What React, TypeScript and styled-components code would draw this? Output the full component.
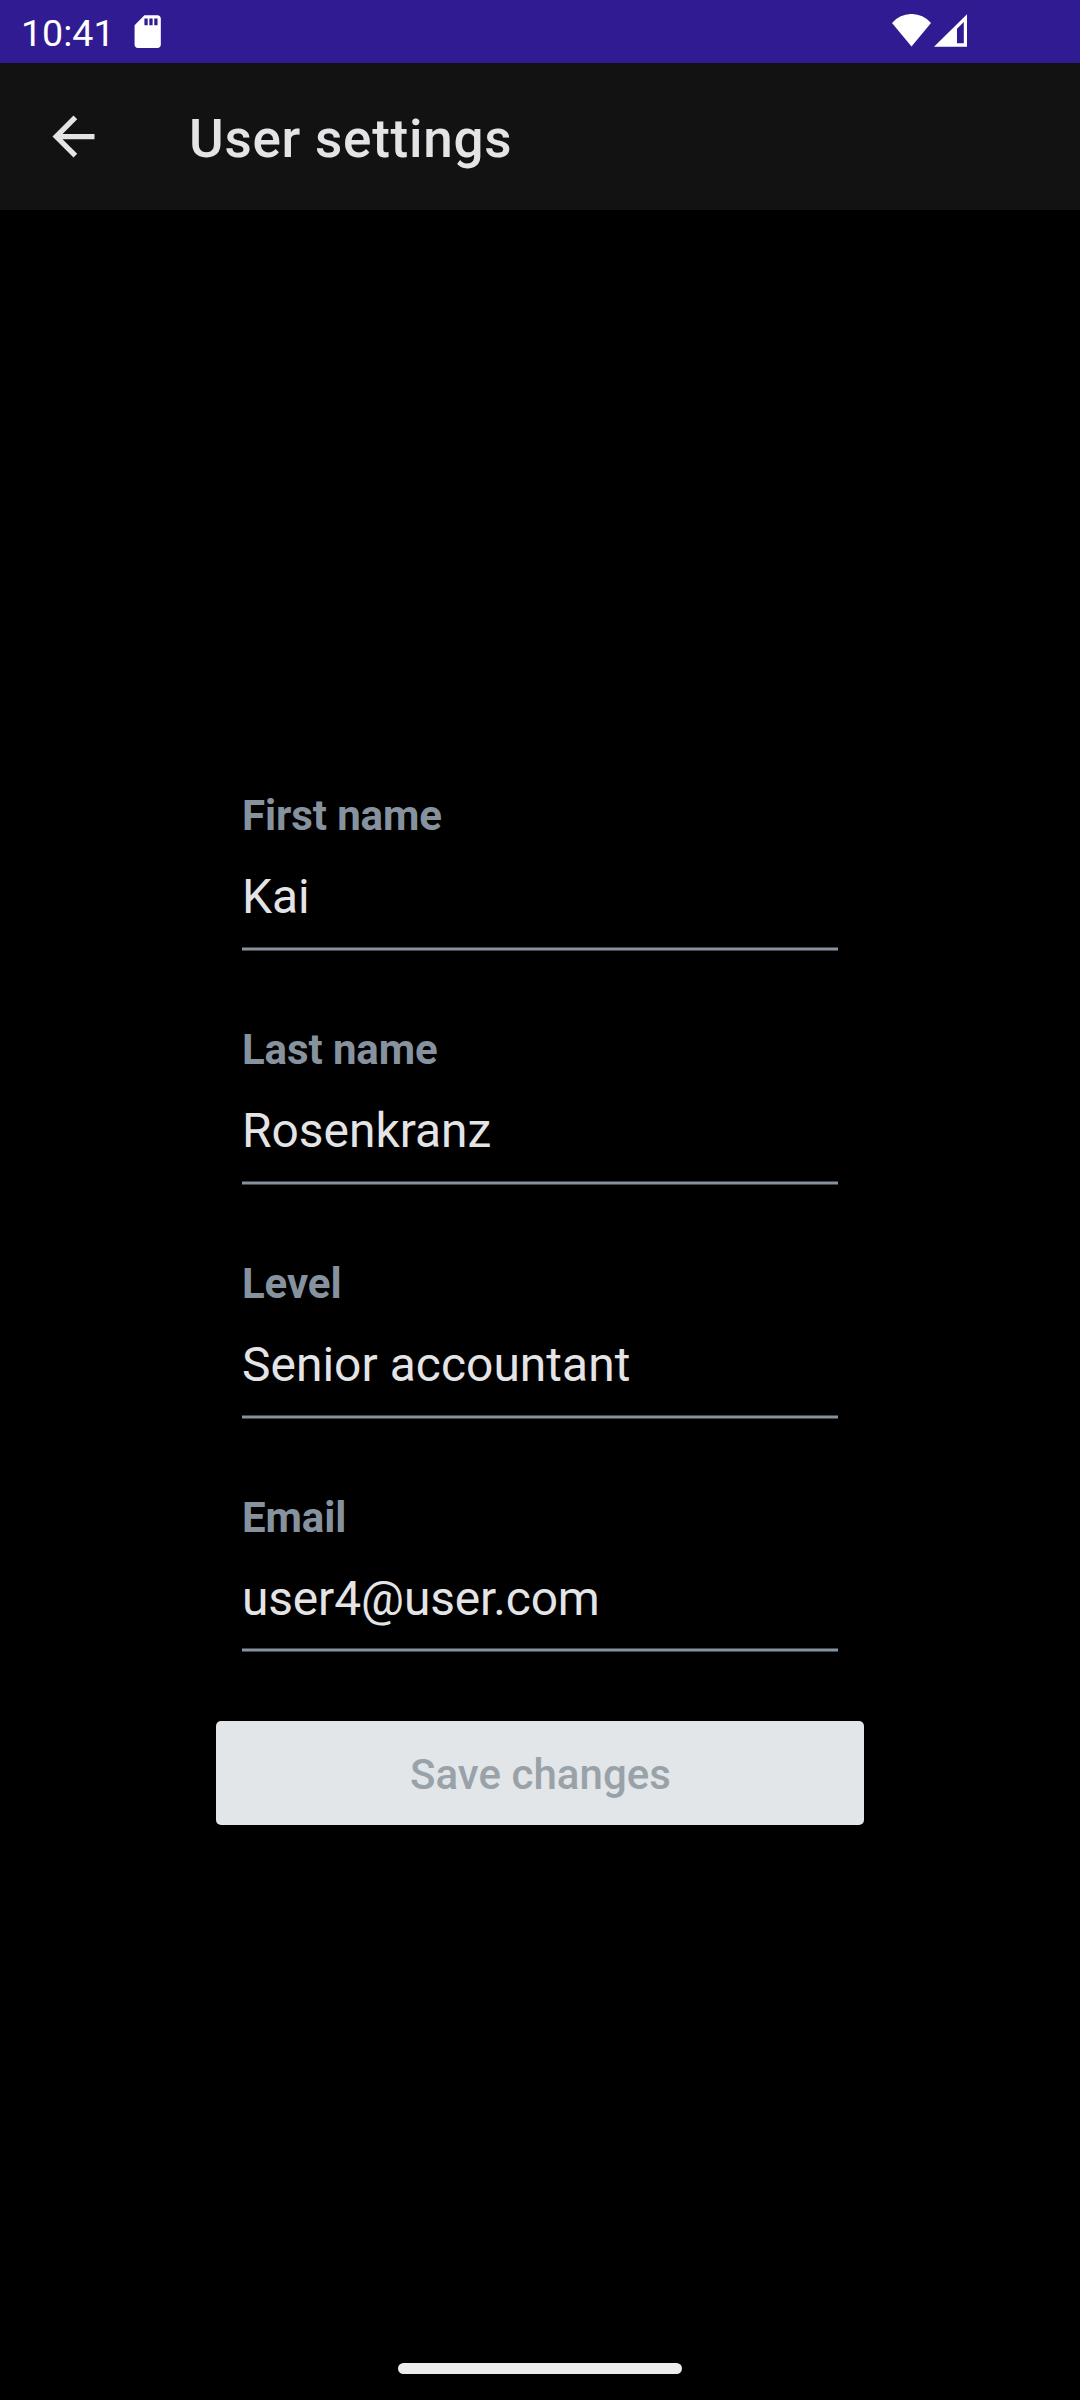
import React from "react";
import styled, { createGlobalStyle } from "styled-components";

const GlobalStyle = createGlobalStyle`
  html, body { margin: 0; padding: 0; background: #000; }
  *, *::before, *::after { box-sizing: border-box; }
`;

const Screen = styled.div`
  display: flex;
  flex-direction: column;
  width: 1080px;
  height: 2400px;
  background: #000;
  color: #e4e4e6;
  font-family: Roboto, "Noto Sans", sans-serif;
  overflow: hidden;
`;

const StatusBar = styled.header`
  display: flex;
  align-items: flex-start;
  justify-content: space-between;
  flex: none;
  height: 63px;
  background: #311b92;
  color: #fff;
`;

const StatusStart = styled.div`
  display: flex;
  padding: 12px 0 0 21px;
`;

const Clock = styled.span`
  width: 107px;
  font-size: 37.6px;
  line-height: 42px;
`;

const StatusEnd = styled.div`
  display: flex;
  padding: 14px 113px 0 0;
  gap: 3px;
`;

const Icon = styled.svg`
  display: block;
  flex: none;
  fill: currentColor;
`;

const AppBar = styled.nav`
  display: flex;
  align-items: center;
  flex: none;
  height: 147px;
  padding: 0 42px;
  gap: 84px;
  background: #121212;
`;

const BackButton = styled.button`
  display: flex;
  padding: 0;
  border: 0;
  background: none;
  color: inherit;
`;

const Title = styled.h1`
  margin: 0;
  padding-top: 5px;
  font-size: 53px;
  font-weight: 500;
  letter-spacing: 0.75px;
  line-height: 62px;
  white-space: nowrap;
`;

const Form = styled.main`
  display: flex;
  flex-direction: column;
  flex: 1;
  padding: 581px 216px 0;
`;

const Fields = styled.div`
  display: flex;
  flex-direction: column;
  gap: 74px;
  padding: 0 26px;
  height: 930px;
`;

const Field = styled.div`
  display: flex;
  flex-direction: column;
`;

const Label = styled.span`
  font-size: 42px;
  font-weight: 700;
  letter-spacing: -0.1px;
  line-height: 50px;
  color: #86939f;
`;

const Value = styled.span<{ $gap: number; $tracking: number }>`
  margin-top: 28px;
  padding-bottom: ${(p) => p.$gap}px;
  font-size: 47.9px;
  letter-spacing: ${(p) => p.$tracking}px;
  line-height: 56px;
  white-space: nowrap;
`;

const Underline = styled.div`
  height: 4px;
  border: solid #434a50;
  border-width: 1px 0;
  background: #86939f;
`;

const SaveButton = styled.button`
  height: 104px;
  padding: 3px 0 0 1px;
  border: 0;
  border-radius: 5px;
  background: #e2e6e9;
  color: #99a2a9;
  font-family: inherit;
  font-size: 42px;
  font-weight: 500;
  letter-spacing: 0.05px;
  line-height: 50px;
`;

const GestureArea = styled.footer`
  display: flex;
  justify-content: center;
  flex: none;
  height: 37px;
`;

const GestureHandle = styled.div`
  width: 284px;
  height: 11px;
  border-radius: 6px;
  background: #ececec;
`;

const fields = [
  { label: "First name", value: "Kai", gap: 22, tracking: 0 },
  { label: "Last name", value: "Rosenkranz", gap: 22, tracking: 0 },
  { label: "Level", value: "Senior accountant", gap: 22, tracking: 0.05 },
  { label: "Email", value: "user4@user.com", gap: 21, tracking: -0.13 },
];

export default function App() {
  return (
    <>
      <GlobalStyle />
      <Screen>
        <StatusBar>
          <StatusStart>
            <Clock>10:41</Clock>
            <Icon width="39.4" height="39.4" viewBox="0 0 24 24">
              <path d="M18 2h-8L4.02 8 4 20c0 1.1.9 2 2 2h12c1.1 0 2-.9 2-2V4c0-1.1-.9-2-2-2zm-6 6h-2V4h2v4zm3 0h-2V4h2v4zm3 0h-2V4h2v4z" />
            </Icon>
          </StatusStart>
          <StatusEnd>
            <Icon width="39" height="33" viewBox="0 0 39 33">
              <path d="M19.5 32.5L0 9A25.6 25.6 0 0 1 39 9Z" />
            </Icon>
            <Icon width="33" height="33" viewBox="0 0 33 33">
              <path fillRule="evenodd" d="M0 32.7L33 .3V32.7ZM23 14.8V29.2H29.8V8Z" />
            </Icon>
          </StatusEnd>
        </StatusBar>
        <AppBar>
          <BackButton aria-label="Back">
            <Icon width="63" height="63" viewBox="0 0 24 24">
              <path d="M20 11H7.83l5.59-5.59L12 4l-8 8 8 8 1.41-1.41L7.83 13H20v-2z" />
            </Icon>
          </BackButton>
          <Title>User settings</Title>
        </AppBar>
        <Form>
          <Fields>
            {fields.map((f) => (
              <Field key={f.label}>
                <Label>{f.label}</Label>
                <Value $gap={f.gap} $tracking={f.tracking}>
                  {f.value}
                </Value>
                <Underline />
              </Field>
            ))}
          </Fields>
          <SaveButton disabled>Save changes</SaveButton>
        </Form>
        <GestureArea>
          <GestureHandle />
        </GestureArea>
      </Screen>
    </>
  );
}
